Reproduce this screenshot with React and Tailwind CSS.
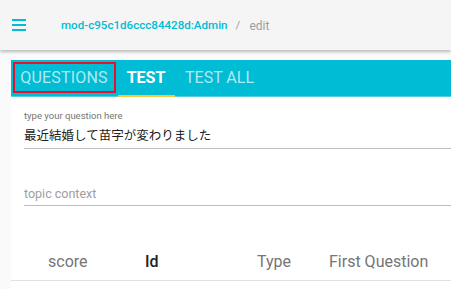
import React from "react";

export default function App() {
  const roboto = { fontFamily: "Roboto, 'Noto Sans CJK JP', sans-serif" };
  return (
    <div className="w-[451px] h-[289px] overflow-hidden bg-[#fafafa]" style={roboto}>
      <header className="relative z-10 h-[50px] bg-[#f5f5f5] flex items-center shadow-[0_2px_3px_rgba(0,0,0,0.25)]">
        <div className="ml-[12px] mt-[-1px] w-[14px] flex flex-col gap-[3px]">
          <div className="h-[2px] bg-[#00bcd4]" />
          <div className="h-[2px] bg-[#00bcd4]" />
          <div className="h-[2px] bg-[#00bcd4]" />
        </div>
        <div className="ml-[35px] mt-[2px] flex items-center text-[11.6px] leading-none">
          <span className="text-[#00bcd4] font-medium">mod-c95c1d6ccc84428d:Admin</span>
          <span className="ml-[8px] text-[#9e9e9e]">/</span>
          <span className="ml-[9px] text-[#9e9e9e] text-[12px]">edit</span>
        </div>
      </header>
      <main className="pt-[10px] pl-[11px]">
        <div className="bg-white h-[229px]">
          <div className="h-[37px] bg-[#00bcd4] flex border-b border-[#4dd0e1]">
            <div className="w-[106px] h-full flex items-center justify-center">
              <div className="w-[103px] h-[31px] mt-[-1px] border-2 border-[#e8102a] flex items-center justify-center text-[16px] text-white/70 tracking-[0.2px]">
                QUESTIONS
              </div>
            </div>
            <div className="w-[58px] h-full relative flex items-center justify-center text-[16px] text-white font-bold">
              TEST
              <div className="absolute left-[1px] right-0 bottom-[-1px] h-[2px] bg-[#ffc53d]" />
            </div>
            <div className="w-[89px] h-full flex items-center justify-center text-[16px] text-white/70">
              TEST ALL
            </div>
          </div>
          <div className="pl-[13px]">
            <div className="pt-[13px]">
              <div className="text-[9.5px] leading-[12px] text-[#757575]">type your question here</div>
              <div className="mt-[4px] text-[12.5px] leading-[18px] text-[#212121]" style={{ fontFamily: "'Noto Sans CJK JP', sans-serif" }}>
                最近結婚して苗字が変わりました
              </div>
              <div className="mt-[4px] h-px bg-[#bdbdbd]" />
            </div>
            <div className="pt-[36px]">
              <div className="text-[12.5px] leading-[18px] text-[#9e9e9e]">topic context</div>
              <div className="mt-[2px] h-px bg-[#bdbdbd]" />
            </div>
          </div>
          <div className="mt-[37px] h-[37px] pl-[37px] flex items-center text-[16px] text-[#757575]">
            <div className="w-[97px]">score</div>
            <div className="w-[112px] font-medium text-[#212121]">Id</div>
            <div className="w-[72px]">Type</div>
            <div className="whitespace-nowrap">First Question</div>
          </div>
          <div className="h-px bg-[#e0e0e0]" />
        </div>
      </main>
    </div>
  );
}
